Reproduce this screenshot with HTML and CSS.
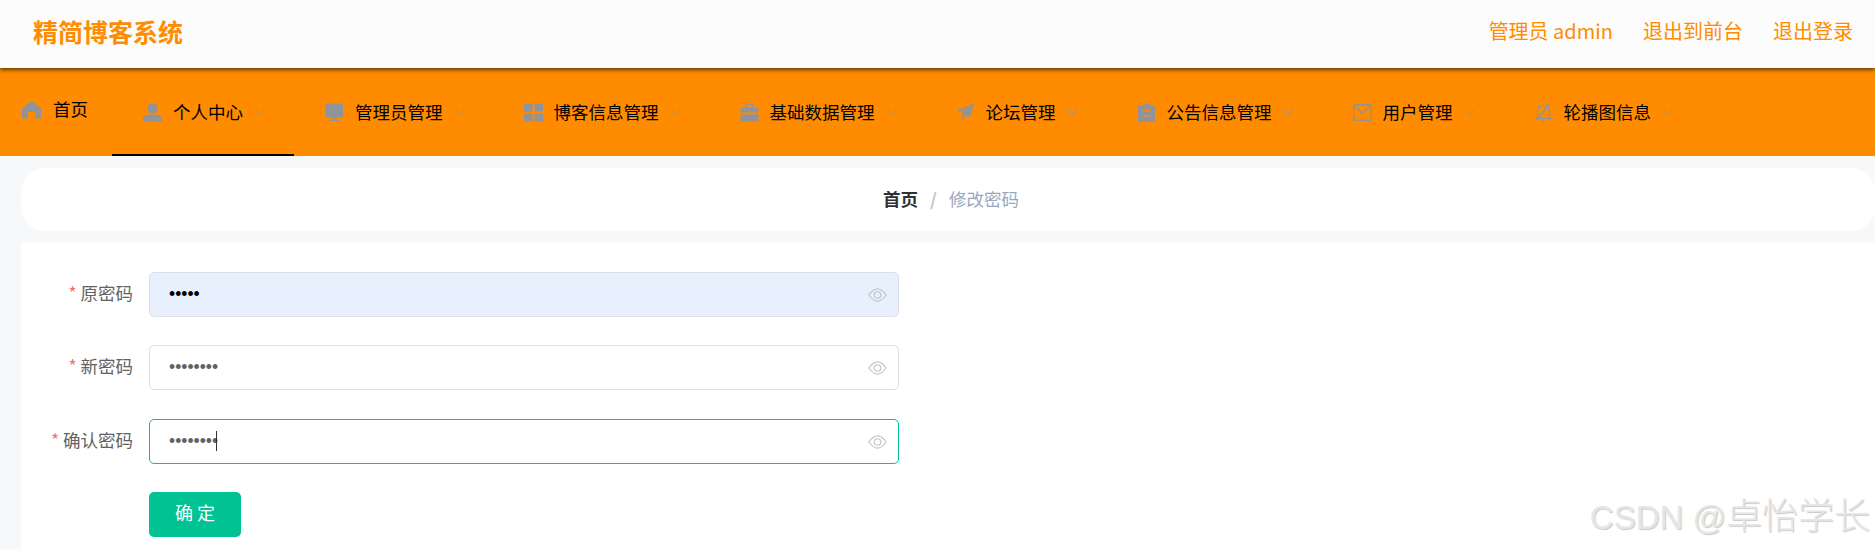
FILE: index.html
```html
<!DOCTYPE html>
<html lang="en">
<head>
    <meta charset="UTF-8">
    <meta name="viewport" content="width=device-width, initial-scale=1.0">
    <title>精简博客系统</title>
    <link rel="stylesheet" href="styles.css">
</head>
<body>

<svg class="defs">
    <symbol id="chevron" viewBox="0 0 11 7"><path d="M0.5 0.5 L5.5 6 L10.5 0.5" fill="none" stroke="currentColor"/></symbol>
    <symbol id="eye" viewBox="0 0 18 13"><path d="M0.7 6.5 C4.5 1.6 6.8 0.7 9 0.7 C11.2 0.7 13.5 1.6 17.3 6.5 C13.5 11.4 11.2 12.3 9 12.3 C6.8 12.3 4.5 11.4 0.7 6.5 Z" fill="none" stroke="currentColor" stroke-width="1.1"/><circle cx="9" cy="6.5" r="3.1" fill="none" stroke="currentColor" stroke-width="1.1"/></symbol>
</svg>

<div id="header">
    <div class="brand">精简博客系统</div>
    <div class="header-links">
        <span>管理员 admin</span>
        <span>退出到前台</span>
        <span>退出登录</span>
    </div>
</div>

<div id="nav">
    <div class="nav-item nav-home">
        <svg class="nav-icon" viewBox="0 0 19 19"><path d="M9.5 0.5 L19 8.5 V18.5 H13 V12 H6 V18.5 H0 V8.5 Z"/></svg>
        <span>首页</span>
    </div>
    <div class="nav-item active">
        <svg class="nav-icon" viewBox="0 0 19 19"><circle cx="9.5" cy="5.5" r="5.2"/><path d="M0 18.5 V15.5 C0 13 2.5 11.8 5 11.8 H14 C16.5 11.8 19 13 19 15.5 V18.5 Z"/></svg>
        <span>个人中心</span>
        <svg class="chevron"><use href="#chevron"/></svg>
    </div>
    <div class="nav-item">
        <svg class="nav-icon" viewBox="0 0 19 19"><path d="M0.5 0.5 H18 V14.5 H0.5 Z M8 14.5 H10.5 V16.5 H14 V18 H4.5 V16.5 H8 Z"/></svg>
        <span>管理员管理</span>
        <svg class="chevron"><use href="#chevron"/></svg>
    </div>
    <div class="nav-item">
        <svg class="nav-icon" viewBox="0 0 19 19"><path d="M0 0.5 H8.5 V8.5 H0 Z M10.5 0.5 H19 V8.5 H10.5 Z M0 10.5 H8.5 V18.5 H0 Z M10.5 10.5 H19 V18.5 H10.5 Z"/></svg>
        <span>博客信息管理</span>
        <svg class="chevron"><use href="#chevron"/></svg>
    </div>
    <div class="nav-item">
        <svg class="nav-icon" viewBox="0 0 19 19"><path d="M0.5 4.5 H5.5 V0.5 H13.5 V4.5 H18.5 V9.5 H0.5 Z M7 4.5 H12 V2 H7 Z M0.5 11.5 H18.5 V18.5 H0.5 Z" fill-rule="evenodd"/></svg>
        <span>基础数据管理</span>
        <svg class="chevron"><use href="#chevron"/></svg>
    </div>
    <div class="nav-item">
        <svg class="nav-icon" viewBox="0 0 19 19"><path d="M18.5 0 L14 14.5 L9.5 12 L6.5 18.5 V10 Z M18.5 0 L0.5 7.7 L5.5 9.8 Z"/></svg>
        <span>论坛管理</span>
        <svg class="chevron"><use href="#chevron"/></svg>
    </div>
    <div class="nav-item">
        <svg class="nav-icon" viewBox="0 0 19 19"><path d="M1 2.5 H6 V0.5 H13 V2.5 H18 V19 H1 Z M5.5 7 V8.5 H13.5 V7 Z M5.5 12 V13.5 H13.5 V12 Z" fill-rule="evenodd"/></svg>
        <span>公告信息管理</span>
        <svg class="chevron"><use href="#chevron"/></svg>
    </div>
    <div class="nav-item">
        <svg class="nav-icon nav-line" viewBox="0 0 19 19"><rect x="0.7" y="1.7" width="17.6" height="15.6" rx="1.5"/><path d="M1.5 2.5 L9.5 10.5 L17.5 2.5"/></svg>
        <span>用户管理</span>
        <svg class="chevron"><use href="#chevron"/></svg>
    </div>
    <div class="nav-item">
        <svg class="nav-icon nav-line" viewBox="0 0 19 19"><path d="M3.5 15.5 V8 C3.5 4.5 6 2.5 9.5 2.5 C13 2.5 15.5 4.5 15.5 8 V15.5 M0.5 15.5 H18.5 M8 18 H11 M15.5 0.5 L3 17"/></svg>
        <span>轮播图信息</span>
        <svg class="chevron"><use href="#chevron"/></svg>
    </div>
</div>

<div id="main">
    <div class="breadcrumb">
        <b>首页</b>
        <i>/</i>
        <span>修改密码</span>
    </div>

    <form class="card">
        <div class="form-row">
            <label><em>*</em> 原密码</label>
            <div class="field autofill">
                <input type="password" value="12345">
                <svg class="eye"><use href="#eye"/></svg>
            </div>
        </div>
        <div class="form-row">
            <label><em>*</em> 新密码</label>
            <div class="field">
                <input type="password" value="12345678">
                <svg class="eye"><use href="#eye"/></svg>
            </div>
        </div>
        <div class="form-row confirm-row">
            <label><em>*</em> 确认密码</label>
            <div class="field focused">
                <input type="password" value="12345678">
                <span class="caret"></span>
                <svg class="eye"><use href="#eye"/></svg>
            </div>
        </div>
        <div class="form-row">
            <label></label>
            <button type="button" class="submit-btn">确定</button>
        </div>
    </form>
</div>

<div class="watermark">CSDN @<span>卓怡学长</span></div>

</body>
</html>
```

FILE: styles.css
```css
html {
    overflow: hidden;
}

body {
    margin: 0;
    height: 549px;
    overflow: hidden;
    background-color: #f7f8fa;
    font-family: "Noto Sans CJK SC", "Liberation Sans", sans-serif;
    font-size: 17.5px;
    position: relative;
}

.defs {
    display: none;
}

#header {
    height: 68px;
    box-sizing: border-box;
    background-color: #fcfcfc;
    display: flex;
    justify-content: space-between;
    align-items: center;
    padding: 0 22px 6px 33px;
    color: #ff8c00;
    position: relative;
    z-index: 2;
    box-shadow: 0 2px 4px rgba(0, 0, 0, 0.6);
    line-height: 1;
}

.brand {
    font-size: 25px;
    font-weight: 700;
}

.header-links {
    display: flex;
    gap: 30px;
    font-size: 20px;
}

#nav {
    height: 88px;
    background-color: #ff8c00;
    display: flex;
    color: #000;
    line-height: 1;
}

.nav-item {
    display: flex;
    align-items: center;
    padding: 2px 28px 0 31px;
    box-sizing: border-box;
    border-bottom: 2px solid transparent;
}

.nav-item.active {
    border-bottom-color: #000;
    padding-right: 29px;
}

.nav-home {
    padding: 0 24px 4px 22px;
}

.nav-icon {
    width: 19px;
    height: 19px;
    margin-right: 11px;
    fill: #909399;
}

.nav-home .nav-icon {
    margin-right: 12px;
}

.nav-line {
    fill: none;
    stroke: #909399;
    stroke-width: 1.4;
}

.chevron {
    width: 11px;
    height: 7px;
    margin-left: 11px;
    color: #909399;
}

#main {
    padding: 12px 0 0 21px;
}

.breadcrumb {
    height: 63px;
    box-sizing: border-box;
    background-color: #fff;
    border-radius: 24px;
    display: flex;
    justify-content: center;
    align-items: center;
    gap: 12px;
    color: #97a8be;
    line-height: 1;
    padding: 0 0 2px 6px;
}

.breadcrumb b {
    color: #303133;
}

.breadcrumb i {
    color: #c0c4cc;
    font-style: normal;
    font-weight: 700;
}

.card {
    margin-top: 12px;
    background-color: #fff;
    padding: 29px 0 12px 0;
    display: flex;
    flex-direction: column;
    gap: 28px;
}

.form-row {
    display: flex;
    align-items: center;
}

.confirm-row {
    margin-top: 1px;
}

.form-row label {
    width: 112px;
    margin-right: 16px;
    padding-bottom: 4px;
    text-align: right;
    color: #606266;
    line-height: 1;
}

.form-row em {
    color: #f56c6c;
    font-style: normal;
}

.field {
    width: 750px;
    height: 45px;
    box-sizing: border-box;
    border: 1.5px solid #dcdfe6;
    border-radius: 5px;
    padding: 0 11px 0 19px;
    display: flex;
    align-items: center;
    position: relative;
    background-color: #fff;
}

.field input {
    flex: 1;
    border: none;
    outline: none;
    padding: 0;
    background: none;
    color: #606266;
    font-family: "Liberation Sans", sans-serif;
    font-size: 17.5px;
}

.field.autofill {
    background-color: #e8f0fe;
}

.field.autofill input {
    color: #000;
}

.field.focused {
    border-color: #00c292;
}

.caret {
    position: absolute;
    left: 66px;
    top: 11px;
    width: 1px;
    height: 20px;
    background-color: #303133;
}

.eye {
    width: 19px;
    height: 14px;
    color: #c0c4cc;
}

.submit-btn {
    width: 92px;
    height: 45px;
    border: none;
    border-radius: 5px;
    background-color: #00c292;
    color: #fff;
    font-family: inherit;
    font-size: 18px;
    line-height: 1;
    letter-spacing: 4px;
    padding: 0 0 5px 4px;
}

.watermark {
    position: absolute;
    right: 5px;
    bottom: 11px;
    font-family: "Liberation Sans", sans-serif;
    font-size: 33px;
    line-height: 40px;
    color: #e6e6e6;
    text-shadow: 1px 1px 1px #c8c8c8;
}

.watermark span {
    font-family: "Noto Sans CJK SC", sans-serif;
    font-size: 36px;
    font-weight: 300;
}
```
